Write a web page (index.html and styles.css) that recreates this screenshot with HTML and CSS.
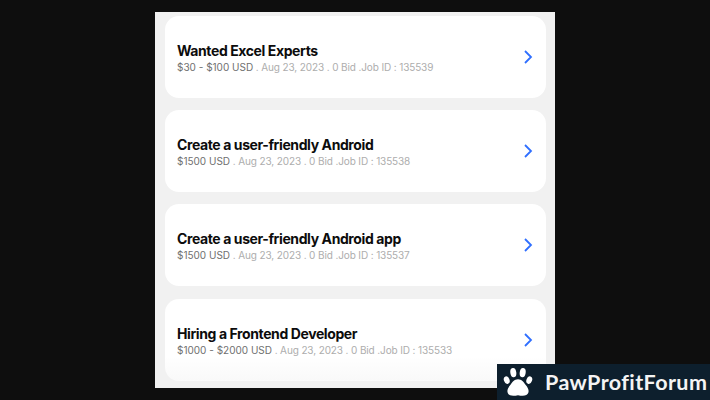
FILE: index.html
```html
<!DOCTYPE html>
<html lang="en">
<head>
    <meta charset="UTF-8">
    <meta name="viewport" content="width=device-width, initial-scale=1.0">
    <title>Job List</title>
    <link rel="stylesheet" href="styles.css">
</head>
<body>
    <div class="job-list">
        <div class="job-card">
            <div class="job-info">
                <h3>Wanted Excel Experts</h3>
                <p><span class="price">$30 - $100 USD</span> . Aug 23, 2023 . 0 Bid .Job ID : 135539</p>
            </div>
            <svg class="chevron" viewBox="0 0 10 16"><path d="M2 2l6 6-6 6"/></svg>
        </div>
        <div class="job-card">
            <div class="job-info">
                <h3>Create a user-friendly Android</h3>
                <p><span class="price">$1500 USD</span> . Aug 23, 2023 . 0 Bid .Job ID : 135538</p>
            </div>
            <svg class="chevron" viewBox="0 0 10 16"><path d="M2 2l6 6-6 6"/></svg>
        </div>
        <div class="job-card">
            <div class="job-info">
                <h3>Create a user-friendly Android app</h3>
                <p><span class="price">$1500 USD</span> . Aug 23, 2023 . 0 Bid .Job ID : 135537</p>
            </div>
            <svg class="chevron" viewBox="0 0 10 16"><path d="M2 2l6 6-6 6"/></svg>
        </div>
        <div class="job-card last">
            <div class="job-info">
                <h3>Hiring a Frontend Developer</h3>
                <p><span class="price">$1000 - $2000 USD</span> . Aug 23, 2023 . 0 Bid .Job ID : 135533</p>
            </div>
            <svg class="chevron" viewBox="0 0 10 16"><path d="M2 2l6 6-6 6"/></svg>
        </div>
    </div>

    <div class="watermark">
        <svg class="paw" viewBox="0 0 32 32">
            <ellipse cx="4" cy="14" rx="3" ry="4.2" transform="rotate(-20 4 14)"/>
            <ellipse cx="11" cy="6" rx="3.2" ry="5" transform="rotate(-8 11 6)"/>
            <ellipse cx="21" cy="6" rx="3.2" ry="5" transform="rotate(8 21 6)"/>
            <ellipse cx="28" cy="14" rx="3" ry="4.2" transform="rotate(20 28 14)"/>
            <path d="M16 13c4 0 6 3 8 6 2.500 3 4 5.500 3 8.500-1 3.500-6 3.500-11 2.500-5 1-10 1-11-2.500-1-3 .5-5.500 3-8.500 2-3 4-6 8-6z"/>
        </svg>
        <span>PawProfitForum</span>
    </div>
</body>
</html>
```

FILE: styles.css
```css
* {
    box-sizing: border-box;
}
body {
    margin: 0;
    height: 400px;
    overflow: hidden;
    background-color: #0e0e0e;
    font-family: Inter, 'Liberation Sans', sans-serif;
}
.job-list {
    display: flex;
    flex-direction: column;
    gap: 12.2px;
    width: 400px;
    height: 376px;
    margin: 12px 0 0 155px;
    padding: 4px 9px 0 10px;
    background-color: #f1f1f1;
}
.job-card {
    display: flex;
    align-items: center;
    justify-content: space-between;
    flex-shrink: 0;
    height: 82px;
    padding: 0 13px 0 12px;
    background-color: white;
    border-radius: 14px;
}
.job-card.last {
    background: linear-gradient(#fff 70%, #f9f9f9);
}
.job-info {
    padding-top: 2px;
}
.job-info h3 {
    margin: 0;
    font-size: 14px;
    line-height: 17px;
    font-weight: 700;
    letter-spacing: -0.4px;
    color: #0c0c0c;
}
.job-info p {
    margin: 1px 0 0;
    font-size: 10px;
    line-height: 14px;
    letter-spacing: -0.12px;
    color: #adadad;
}
.price {
    letter-spacing: 0;
    color: #6f6f6f;
}
.chevron {
    width: 10px;
    height: 16px;
    fill: none;
    stroke: #2f6fff;
    stroke-width: 1.8;
}
.watermark {
    position: absolute;
    left: 497px;
    top: 364px;
    display: flex;
    align-items: center;
    gap: 12px;
    width: 213px;
    height: 36px;
    padding-left: 6px;
    background-color: #0d1f2d;
}
.paw {
    width: 30px;
    height: 30px;
    fill: white;
}
.watermark span {
    font-family: Lato, sans-serif;
    font-size: 21.5px;
    font-weight: 700;
    letter-spacing: 0.4px;
    color: #f4f4f4;
}
```
